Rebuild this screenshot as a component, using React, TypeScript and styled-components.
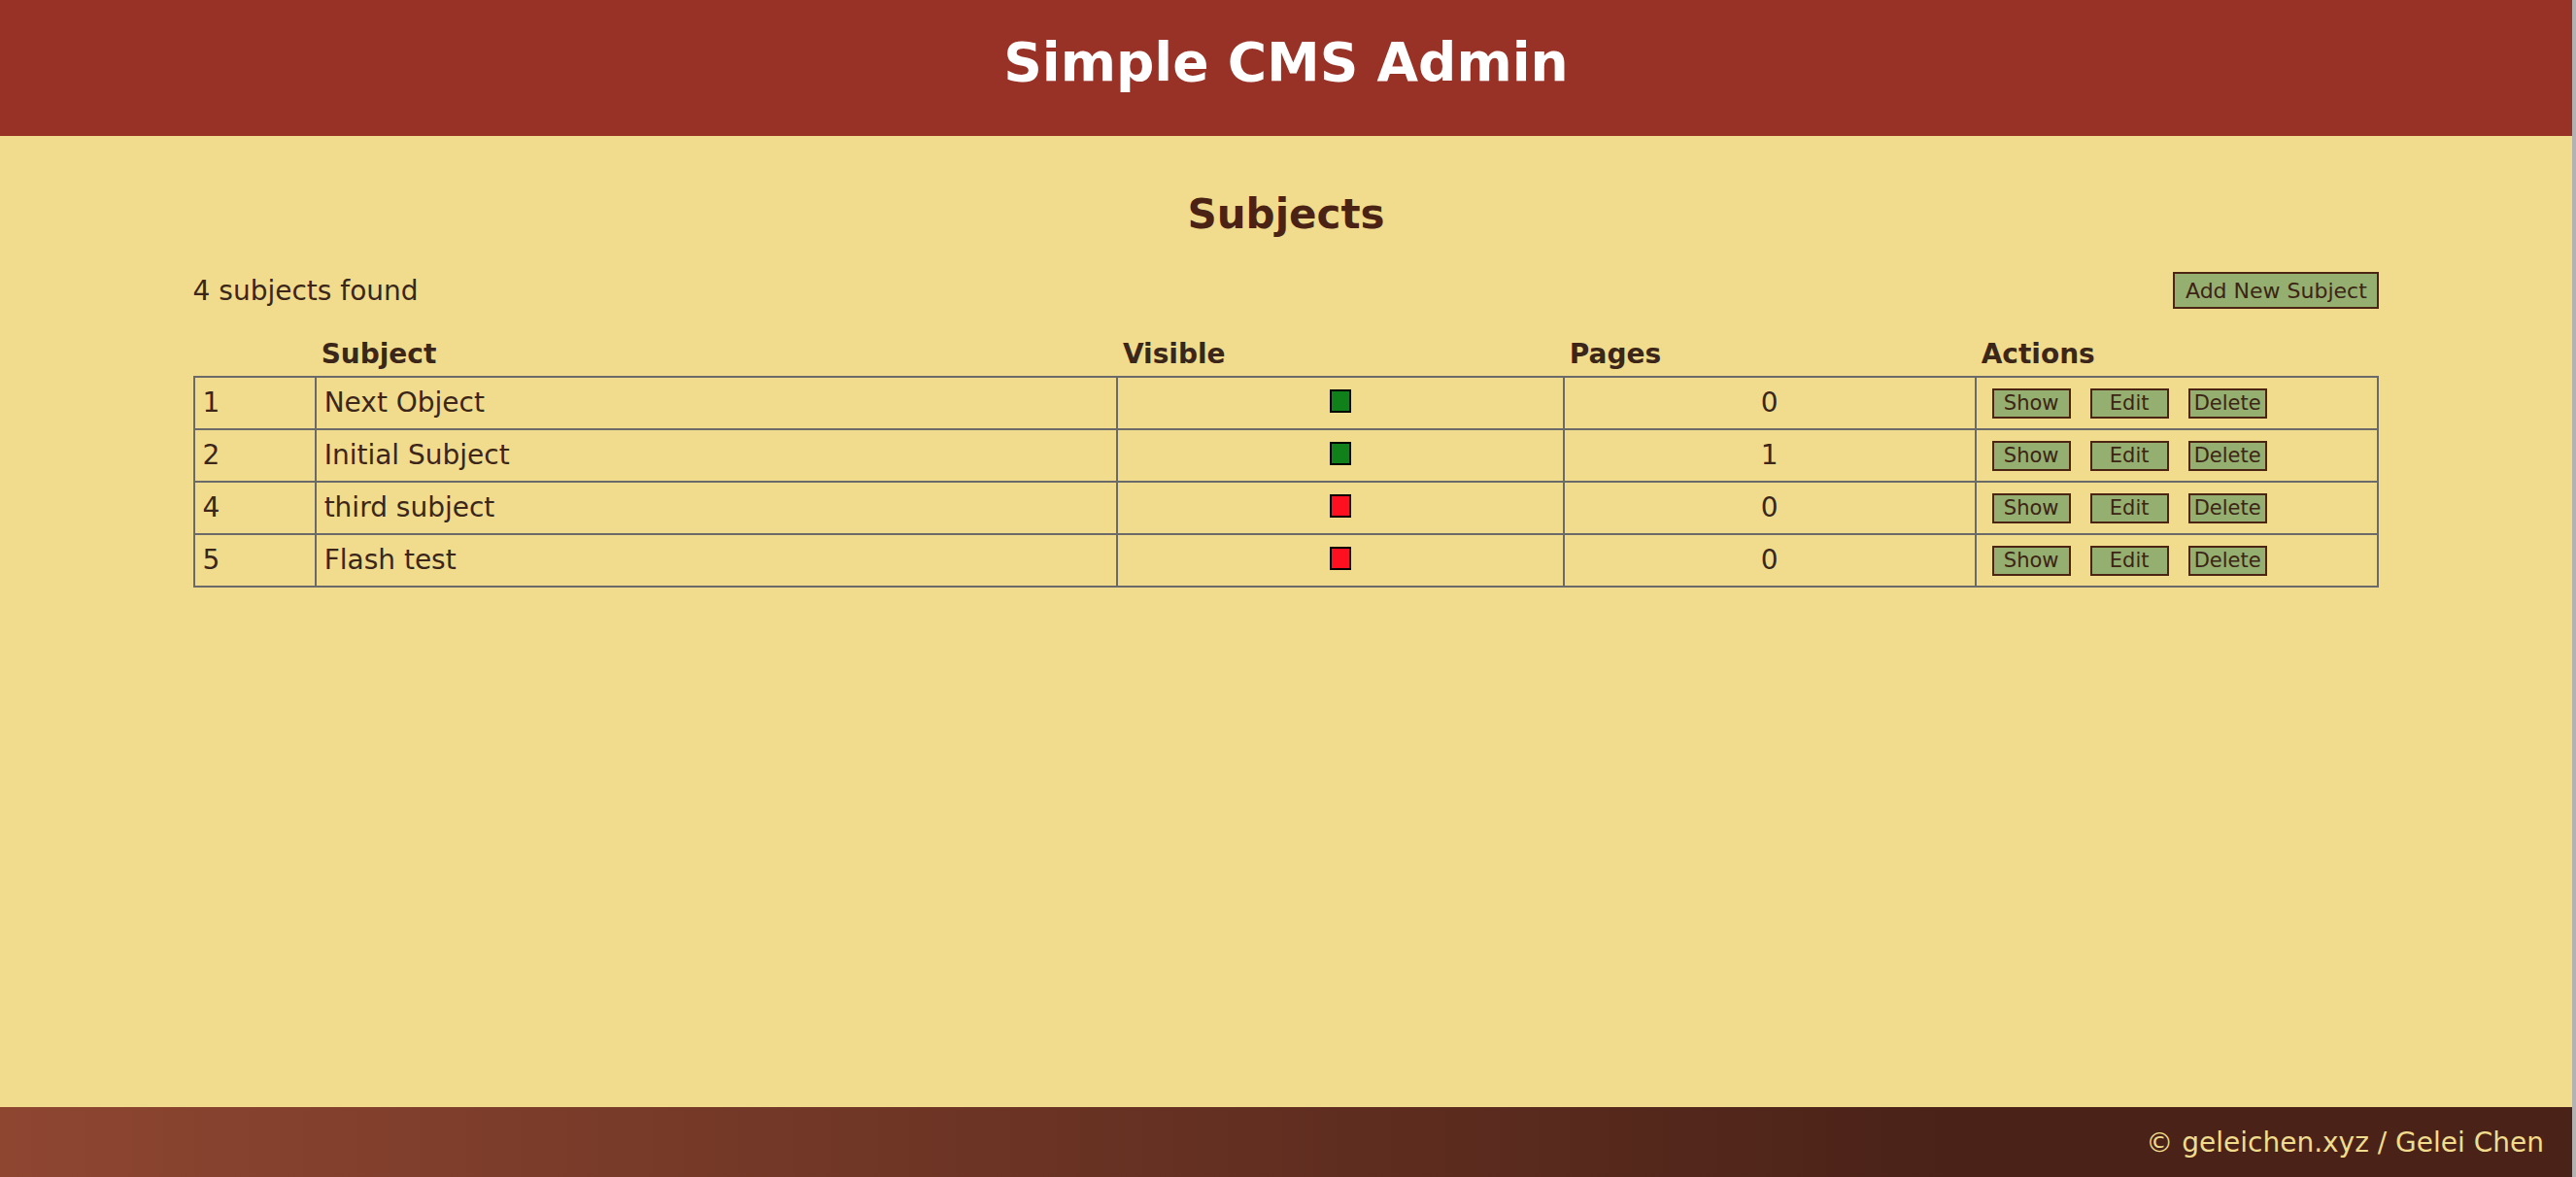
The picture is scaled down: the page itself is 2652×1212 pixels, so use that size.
import React from "react";
import styled, { createGlobalStyle } from "styled-components";

const GlobalStyle = createGlobalStyle`
  html, body {
    margin: 0;
    padding: 0;
    background: #f0dc8c;
  }
  body {
    font-family: "DejaVu Sans", Verdana, "Liberation Sans", sans-serif;
    font-size: 28px;
    color: #3b2619;
  }
`;

const Page = styled.div`
  min-height: 100vh;
  display: flex;
  flex-direction: column;
  box-sizing: border-box;
  border-right: 4px solid #b2b2b2;
  background: #f0dc8c;
`;

const Header = styled.header`
  height: 140px;
  background: #983226;
  display: flex;
  align-items: center;
  justify-content: center;
`;

const Title = styled.h1`
  margin: 0 0 12px;
  font-size: 55px;
  font-weight: bold;
  color: #ffffff;
  line-height: normal;
`;

const Main = styled.main`
  flex: 1;
  width: 85%;
  margin: 0 auto;
  display: flex;
  flex-direction: column;
`;

const Heading = styled.h2`
  margin: 56px 0 0;
  text-align: center;
  font-size: 42px;
  font-weight: bold;
  line-height: normal;
  color: #4b2315;
`;

const Toolbar = styled.div`
  margin-top: 35px;
  display: flex;
  align-items: center;
  justify-content: space-between;
  height: 38px;
`;

const Count = styled.span`
  font-size: 28px;
  color: #3b2619;
`;

const Button = styled.a<{ $wide?: boolean }>`
  display: inline-flex;
  align-items: center;
  justify-content: center;
  box-sizing: border-box;
  background: #94af6f;
  border: 2px solid #4c2414;
  color: #3d2415;
  font-size: ${(p) => (p.$wide ? "22px" : "21px")};
  text-decoration: none;
  cursor: pointer;
  width: ${(p) => (p.$wide ? "212px" : "81px")};
  height: ${(p) => (p.$wide ? "38px" : "31px")};
`;

const Table = styled.table`
  margin-top: 26px;
  width: 100%;
  border-collapse: collapse;
  table-layout: fixed;
`;

const Col = styled.col<{ $w: string }>`
  width: ${(p) => p.$w};
`;

const Th = styled.th`
  text-align: left;
  font-size: 28px;
  font-weight: bold;
  color: #3b2619;
  padding: 4px 6px 6px;
  line-height: normal;
`;

const Td = styled.td<{ $align?: "left" | "center" }>`
  border: 2px solid #6a6a6a;
  padding: 9px 8px;
  line-height: 34px;
  font-size: 28px;
  color: #3b2619;
  text-align: ${(p) => p.$align ?? "left"};
  vertical-align: middle;
`;

const Indicator = styled.span<{ $on: boolean }>`
  display: inline-block;
  vertical-align: middle;
  margin-bottom: 6px;
  width: 18px;
  height: 20px;
  border: 2px solid #000;
  background: ${(p) => (p.$on ? "#10801a" : "#ff1020")};
`;

const Actions = styled.div`
  display: flex;
  align-items: center;
  gap: 20px;
  padding-left: 8px;
  height: 34px;
`;

const Footer = styled.footer`
  height: 72px;
  background: linear-gradient(to right, #8e4631 0%, #4a2218 76%);
  display: flex;
  align-items: center;
  justify-content: flex-end;
  padding-right: 29px;
  color: #f0dc8c;
  font-size: 28px;
`;

const subjects = [
  { id: 1, name: "Next Object", visible: true, pages: 0 },
  { id: 2, name: "Initial Subject", visible: true, pages: 1 },
  { id: 4, name: "third subject", visible: false, pages: 0 },
  { id: 5, name: "Flash test", visible: false, pages: 0 },
];

export default function App() {
  return (
    <>
      <GlobalStyle />
      <Page>
        <Header>
          <Title>Simple CMS Admin</Title>
        </Header>
        <Main>
          <Heading>Subjects</Heading>
          <Toolbar>
            <Count>{subjects.length} subjects found</Count>
            <Button $wide>Add New Subject</Button>
          </Toolbar>
          <Table>
            <colgroup>
              <Col $w="5.56%" />
              <Col $w="36.7%" />
              <Col $w="20.45%" />
              <Col $w="18.85%" />
              <Col $w="18.44%" />
            </colgroup>
            <thead>
              <tr>
                <Th></Th>
                <Th>Subject</Th>
                <Th>Visible</Th>
                <Th>Pages</Th>
                <Th>Actions</Th>
              </tr>
            </thead>
            <tbody>
              {subjects.map((s) => (
                <tr key={s.id}>
                  <Td>{s.id}</Td>
                  <Td>{s.name}</Td>
                  <Td $align="center">
                    <Indicator $on={s.visible} />
                  </Td>
                  <Td $align="center">{s.pages}</Td>
                  <Td>
                    <Actions>
                      <Button>Show</Button>
                      <Button>Edit</Button>
                      <Button>Delete</Button>
                    </Actions>
                  </Td>
                </tr>
              ))}
            </tbody>
          </Table>
        </Main>
        <Footer>© geleichen.xyz / Gelei Chen</Footer>
      </Page>
    </>
  );
}
